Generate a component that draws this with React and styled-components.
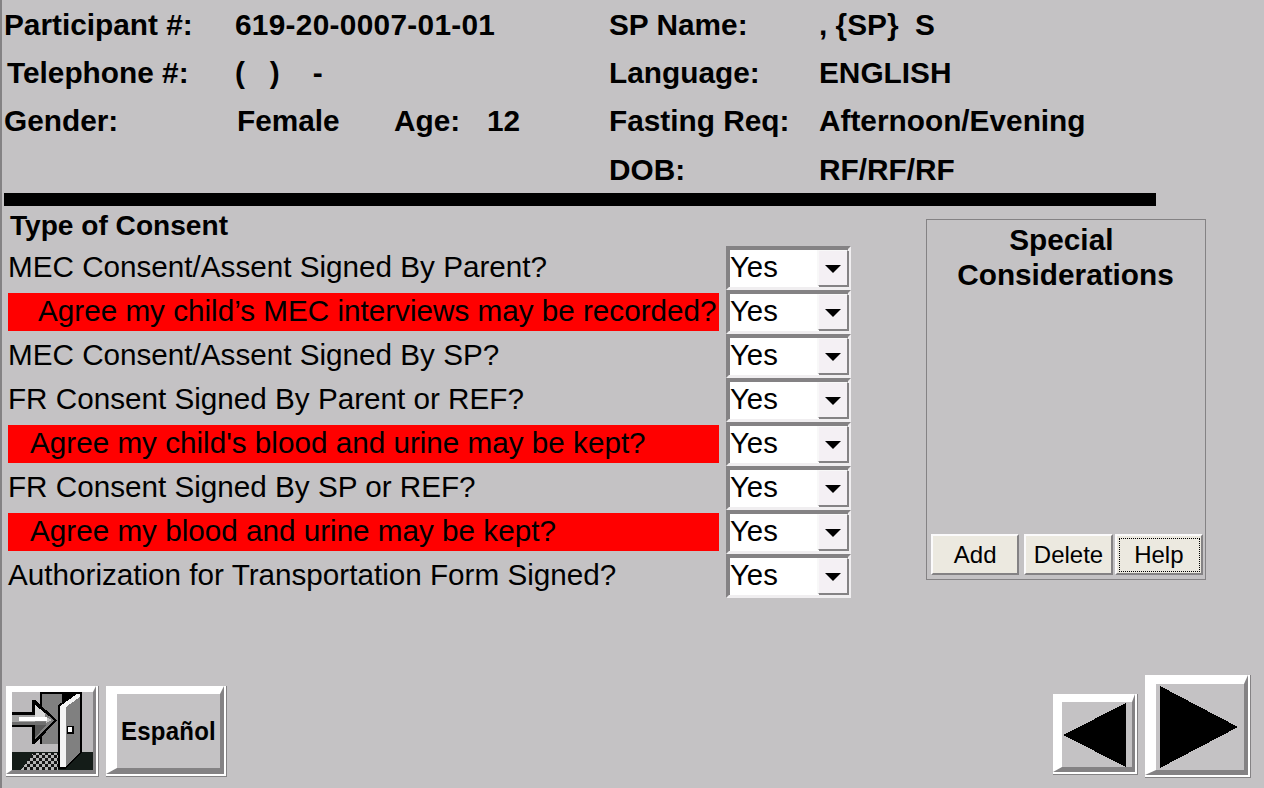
import React from "react";
import styled, { createGlobalStyle } from "styled-components";

const Global = createGlobalStyle`
  html, body { margin: 0; padding: 0; background: #c4c2c4; }
  #root { width: 1264px; height: 788px; overflow: hidden; }
`;
const Page = styled.div`
  box-sizing: border-box; width: 1264px; height: 788px; background: #c4c2c4;
  border-left: 2px solid #848284; padding-left: 2px;
  font-family: "Liberation Sans", Arial, sans-serif; color: #000;
  display: flex; flex-direction: column;
`;
const Header = styled.div`
  display: grid; grid-template-columns: 605px 1fr; height: 193px; flex: none;
`;
const HeaderCol = styled.div`display: grid; grid-template-rows: 50px 46px 50px 47px;`;
const HRow = styled.div`
  display: flex; align-items: center;
  font-size: 29.8px; font-weight: 700; white-space: pre;
`;
const HLabel = styled.div`
  width: ${p => p.$w}px; padding-left: ${p => p.$pl || 0}px; box-sizing: border-box; flex: none;
`;
const Digits = styled.span`letter-spacing: 0.3px;`;
const Rule = styled.div`width: 1152px; height: 13px; background: #000; flex: none;`;
const Body = styled.div`display: flex; flex: none; height: 462px;`;
const ConsentCol = styled.div`width: 922px; flex: none; padding-left: 4px; box-sizing: border-box; padding-top: 5px;`;
const Title = styled.div`font-size: 28.1px; font-weight: 700; height: 35px; line-height: 29px; padding-left: 2px;`;
const Row = styled.div`display: flex; height: 44px; align-items: center;`;
const Label = styled.div`
  width: 711px; margin-right: 7px; height: 38px; line-height: 36px; flex: none; font-size: 29.67px; white-space: pre;
  box-sizing: border-box; padding-left: ${p => p.$indent || 0}px;
  background: ${p => p.$red ? "#ff0000" : "transparent"};
`;
const Select = styled.div`
  box-sizing: border-box; width: 125px; height: 44px; flex: none; background: #fff;
  border: 3px solid; border-color: #848284 #f0eef0 #f0eef0 #848284;
  box-shadow: inset 1px 1px 0 #848284;
  display: flex; align-items: center; justify-content: space-between; font-size: 29.33px;
  padding: 0 0 3px 1px; line-height: 33px;
`;
const Arrow = styled.div`
  box-sizing: border-box; width: 30px; height: 36px; background: #f4f0f4; margin-top: 3px;
  border: 1px solid; border-color: #f8f8f8 #848284 #848284 #f8f8f8;
  box-shadow: 1px 1px 0 #848284, -1px 0 0 #f8f8f8;
  display: flex; align-items: center; justify-content: center;
  &::after { content: ""; border-style: solid; border-width: 8px 8px 0; border-color: #000 transparent transparent; margin-top: 1px; }
`;
const Panel = styled.div`
  box-sizing: border-box; width: 280px; height: 361px; margin-top: 13px; border: 1px solid #848284;
  display: flex; flex-direction: column; justify-content: space-between; padding: 3px 2px 4px 4px;
`;
const PanelTitle = styled.div`text-align: center; font-size: 29.75px; font-weight: 700; line-height: 34px; padding-right: 3px; white-space: pre;`;
const PanelTitleLine = styled.div`margin-bottom: 1px;`;
const PanelButtons = styled.div`display: flex;`;
const PanelButton = styled.div`
  box-sizing: border-box; width: 89px; height: 41px; background: #ece9e0; font-size: 24px;
  margin-right: ${p => p.$mr || 0}px;
  border: 2px solid; border-color: #fbfafb #848284 #848284 #fbfafb;
  display: flex; align-items: center; justify-content: center; position: relative;
  ${p => p.$focus && `&::after { content: ""; position: absolute; inset: 2px 1px 1px 2px; border: 1px dotted #000; }`}
`;
const Footer = styled.div`display: flex; justify-content: space-between; align-items: flex-end; padding: 0 13px 10px 2px; flex: 1;`;
const Group = styled.div`display: flex; align-items: flex-end; gap: 7px;`;
const Bevel = styled.div`
  box-sizing: border-box; width: ${p => p.$w}px; height: ${p => p.$h}px; margin-bottom: ${p => p.$mb || 0}px;
  background: #fff; display: flex; flex: none;
  border-right: 1px solid #848284; border-bottom: 1px solid #848284;
  padding: 0 2px 2px 0;
`;
const Face = styled.div`
  box-sizing: border-box; flex: 1; min-width: 0; background: #c4c2c4; display: flex; align-items: center;
  justify-content: ${p => p.$start ? "flex-start" : "center"};
  padding-left: ${p => p.$pad || 0}px;
  border-style: solid; border-color: #fff #848284 #848284 #fff;
  border-width: ${p => `${p.$t}px ${p.$r}px ${p.$b}px ${p.$l}px`};
`;
const Espanol = styled.span`font-weight: 700; font-size: 24px; letter-spacing: 0.2px; transform: scaleY(1.1);`;

const DoorIcon = () => (
  <svg width="81" height="78" viewBox="0 0 81 78" shapeRendering="crispEdges" style={{ display: "block" }}>
    <defs>
      <pattern id="chk" width="6" height="6" patternUnits="userSpaceOnUse">
        <rect width="6" height="6" fill="#141414" />
        <rect x="0" y="0" width="3" height="3" fill="#b4b4b4" />
        <rect x="3" y="3" width="3" height="3" fill="#b4b4b4" />
      </pattern>
    </defs>
    <rect width="81" height="78" fill="#bcbabc" />
    <rect x="28" y="0" width="42" height="53" fill="#000" />
    <rect x="30" y="2" width="20" height="50" fill="#808080" />
    <rect x="28" y="52" width="22" height="8" fill="#bcbabc" />
    <rect x="0" y="60" width="81" height="18" fill="#141c18" />
    <polygon points="9,78 21,61 46,61 46,78" fill="url(#chk)" />
    <polygon points="20,8 23,8 45,28 23,52 20,52 20,35 0,35 0,20 20,20" fill="#000" />
    <rect x="0" y="23" width="24" height="10" fill="#a4a4a4" />
    <polygon points="23,13 42,28 23,48" fill="#808080" />
    <polygon points="23,13 33,21 33,25 23,25" fill="#d8d8d8" />
    <polygon points="23,33 34,33 23,46" fill="#585858" />
    <rect x="0" y="30" width="34" height="3" fill="#6e6e6e" />
    <polygon points="34,25 40,28 34,31" fill="#c0c0c0" />
    <rect x="7" y="25" width="28" height="4" fill="#fff" />
    <polygon points="46,13 66,0 70,0 70,60 53,77 46,77" fill="#000" />
    <polygon points="48,14 65,2 68,2 68,5 54,15 54,75 48,75" fill="#f4f4f4" />
    <polygon points="54,15 68,5 68,60 54,74" fill="#808080" />
    <rect x="55" y="34" width="7" height="8" fill="#000" />
    <rect x="56" y="35" width="4" height="5" fill="#fff" />
  </svg>
);

const Triangle = ({ w, h, pts }) => (
  <svg width={w} height={h} viewBox={`0 0 ${w} ${h}`} shapeRendering="crispEdges" style={{ display: "block" }}><polygon points={pts} fill="#000" /></svg>
);

const rows = [
  ["MEC Consent/Assent Signed By Parent?"],
  ["Agree my child’s MEC interviews may be recorded?", 30],
  ["MEC Consent/Assent Signed By SP?"],
  ["FR Consent Signed By Parent or REF?"],
  ["Agree my child's blood and urine may be kept?", 22],
  ["FR Consent Signed By SP or REF?"],
  ["Agree my blood and urine may be kept?", 22],
  ["Authorization for Transportation Form Signed?"],
];

export default function App() {
  return (
    <Page>
      <Global />
      <Header>
        <HeaderCol>
          <HRow><HLabel $w={231} $pl={0}>Participant #:</HLabel><Digits>619-20-0007-01-01</Digits></HRow>
          <HRow><HLabel $w={231} $pl={3}>Telephone #:</HLabel>(   )    -</HRow>
          <HRow><HLabel $w={233} $pl={0}>Gender:</HLabel><HLabel $w={157}>Female</HLabel><HLabel $w={93}>Age:</HLabel>12</HRow>
        </HeaderCol>
        <HeaderCol>
          <HRow><HLabel $w={210}>SP Name:</HLabel>, {"{SP}"}  S</HRow>
          <HRow><HLabel $w={210}>Language:</HLabel>ENGLISH</HRow>
          <HRow><HLabel $w={210}>Fasting Req:</HLabel>Afternoon/Evening</HRow>
          <HRow><HLabel $w={210}>DOB:</HLabel>RF/RF/RF</HRow>
        </HeaderCol>
      </Header>
      <Rule />
      <Body>
        <ConsentCol>
          <Title>Type of Consent</Title>
          {rows.map(([t, indent], i) => (
            <Row key={i}>
              <Label $red={!!indent} $indent={indent}>{t}</Label>
              <Select>Yes<Arrow /></Select>
            </Row>
          ))}
        </ConsentCol>
        <Panel>
          <PanelTitle>
            <PanelTitleLine>{"Special "}</PanelTitleLine>
            <PanelTitleLine>Considerations</PanelTitleLine>
          </PanelTitle>
          <PanelButtons>
            <PanelButton $mr={5}>Add</PanelButton>
            <PanelButton $mr={2}>Delete</PanelButton>
            <PanelButton $focus>Help</PanelButton>
          </PanelButtons>
        </Panel>
      </Body>
      <Footer>
        <Group>
          <Bevel $w={93} $h={91} $mb={1}><Face $l={6} $t={6} $r={3} $b={4}><DoorIcon /></Face></Bevel>
          <Bevel $w={121} $h={91} $mb={1}><Face $l={11} $t={8} $r={4} $b={6}><Espanol>Español</Espanol></Face></Bevel>
        </Group>
        <Group>
          <Bevel $w={85} $h={81} $mb={3}><Face $l={9} $t={8} $r={3} $b={5} $start $pad={1}><Triangle w={63} h={64} pts="0,32 63,0 63,64" /></Face></Bevel>
          <Bevel $w={106} $h={103}><Face $l={11} $t={9} $r={4} $b={5} $start $pad={4}><Triangle w={78} h={82} pts="0,0 78,41 0,82" /></Face></Bevel>
        </Group>
      </Footer>
    </Page>
  );
}
